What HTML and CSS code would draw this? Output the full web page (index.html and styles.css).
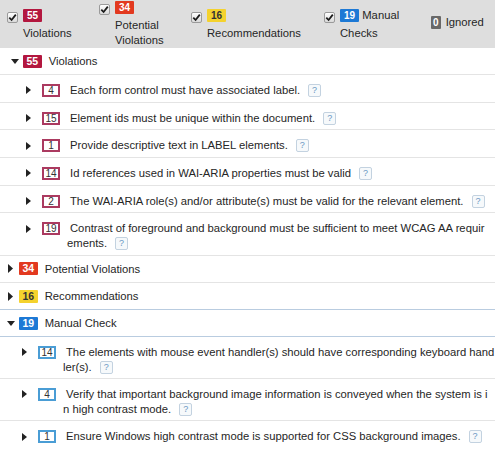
FILE: index.html
```html
<!DOCTYPE html>
<html>
<head>
<meta charset="utf-8">
<link rel="stylesheet" href="styles.css">
</head>
<body>
<div class="panel">
  <div class="filters">
    <div class="filter">
      <span class="check"><svg width="9" height="9" viewBox="0 0 9 9"><path d="M1.3 4.6L3.6 7L7.8 1.6" fill="none" stroke="#1c1c1c" stroke-width="1.8"/></svg></span>
      <span class="filter-text"><span class="badge badge--violation">55</span> Violations</span>
    </div>
    <div class="filter">
      <span class="check"><svg width="9" height="9" viewBox="0 0 9 9"><path d="M1.3 4.6L3.6 7L7.8 1.6" fill="none" stroke="#1c1c1c" stroke-width="1.8"/></svg></span>
      <span class="filter-text"><span class="badge badge--potential">34</span> Potential Violations</span>
    </div>
    <div class="filter">
      <span class="check"><svg width="9" height="9" viewBox="0 0 9 9"><path d="M1.3 4.6L3.6 7L7.8 1.6" fill="none" stroke="#1c1c1c" stroke-width="1.8"/></svg></span>
      <span class="filter-text"><span class="badge badge--recommendation">16</span> Recommendations</span>
    </div>
    <div class="filter">
      <span class="check"><svg width="9" height="9" viewBox="0 0 9 9"><path d="M1.3 4.6L3.6 7L7.8 1.6" fill="none" stroke="#1c1c1c" stroke-width="1.8"/></svg></span>
      <span class="filter-text"><span class="badge badge--manual">19</span> Manual Checks</span>
    </div>
    <div class="filter filter--plain">
      <span class="filter-text"><span class="badge badge--ignored">0</span> Ignored</span>
    </div>
  </div>

  <ul class="groups">
    <li class="group group--shift">
      <div class="group-head">
        <span class="toggle"><svg width="8" height="5" viewBox="0 0 8 5"><path d="M0 0H8L4 5Z" fill="#222"/></svg></span>
        <span class="count count--violation">55</span>
        <span class="group-title">Violations</span>
      </div>
      <ul class="rules">
        <li class="rule">
          <span class="rule-toggle"><svg width="5" height="8" viewBox="0 0 5 8"><path d="M0 0L5 4L0 8Z" fill="#222"/></svg></span>
          <span class="rule-count rule-count--violation">4</span>
          <span class="rule-text">Each form control must have associated label.<span class="help">?</span></span>
        </li>
        <li class="rule">
          <span class="rule-toggle"><svg width="5" height="8" viewBox="0 0 5 8"><path d="M0 0L5 4L0 8Z" fill="#222"/></svg></span>
          <span class="rule-count rule-count--violation">15</span>
          <span class="rule-text">Element ids must be unique within the document.<span class="help">?</span></span>
        </li>
        <li class="rule">
          <span class="rule-toggle"><svg width="5" height="8" viewBox="0 0 5 8"><path d="M0 0L5 4L0 8Z" fill="#222"/></svg></span>
          <span class="rule-count rule-count--violation">1</span>
          <span class="rule-text">Provide descriptive text in LABEL elements.<span class="help">?</span></span>
        </li>
        <li class="rule">
          <span class="rule-toggle"><svg width="5" height="8" viewBox="0 0 5 8"><path d="M0 0L5 4L0 8Z" fill="#222"/></svg></span>
          <span class="rule-count rule-count--violation">14</span>
          <span class="rule-text">Id references used in WAI-ARIA properties must be valid<span class="help">?</span></span>
        </li>
        <li class="rule">
          <span class="rule-toggle"><svg width="5" height="8" viewBox="0 0 5 8"><path d="M0 0L5 4L0 8Z" fill="#222"/></svg></span>
          <span class="rule-count rule-count--violation">2</span>
          <span class="rule-text">The WAI-ARIA role(s) and/or attribute(s) must be valid for the relevant element.<span class="help">?</span></span>
        </li>
        <li class="rule">
          <span class="rule-toggle"><svg width="5" height="8" viewBox="0 0 5 8"><path d="M0 0L5 4L0 8Z" fill="#222"/></svg></span>
          <span class="rule-count rule-count--violation">19</span>
          <span class="rule-text">Contrast of foreground and background must be sufficient to meet WCAG AA requir<br>ements.<span class="help">?</span></span>
        </li>
      </ul>
    </li>

    <li class="group">
      <div class="group-head">
        <span class="toggle"><svg width="5" height="9" viewBox="0 0 5 9"><path d="M0 0L5 4.5L0 9Z" fill="#222"/></svg></span>
        <span class="count count--potential">34</span>
        <span class="group-title">Potential Violations</span>
      </div>
    </li>

    <li class="group">
      <div class="group-head">
        <span class="toggle"><svg width="5" height="9" viewBox="0 0 5 9"><path d="M0 0L5 4.5L0 9Z" fill="#222"/></svg></span>
        <span class="count count--recommendation">16</span>
        <span class="group-title">Recommendations</span>
      </div>
    </li>

    <li class="group group--focus">
      <div class="group-head">
        <span class="toggle"><svg width="8" height="5" viewBox="0 0 8 5"><path d="M0 0H8L4 5Z" fill="#222"/></svg></span>
        <span class="count count--manual">19</span>
        <span class="group-title">Manual Check</span>
      </div>
      <ul class="rules">
        <li class="rule">
          <span class="rule-toggle"><svg width="5" height="8" viewBox="0 0 5 8"><path d="M0 0L5 4L0 8Z" fill="#222"/></svg></span>
          <span class="rule-count rule-count--manual">14</span>
          <span class="rule-text">The elements with mouse event handler(s) should have corresponding keyboard hand<br>ler(s).<span class="help">?</span></span>
        </li>
        <li class="rule">
          <span class="rule-toggle"><svg width="5" height="8" viewBox="0 0 5 8"><path d="M0 0L5 4L0 8Z" fill="#222"/></svg></span>
          <span class="rule-count rule-count--manual">4</span>
          <span class="rule-text">Verify that important background image information is conveyed when the system is i<br>n high contrast mode.<span class="help">?</span></span>
        </li>
        <li class="rule">
          <span class="rule-toggle"><svg width="5" height="8" viewBox="0 0 5 8"><path d="M0 0L5 4L0 8Z" fill="#222"/></svg></span>
          <span class="rule-count rule-count--manual">1</span>
          <span class="rule-text">Ensure Windows high contrast mode is supported for CSS background images.<span class="help">?</span></span>
        </li>
      </ul>
    </li>
  </ul>
</div>
</body>
</html>
```

FILE: styles.css
```css
* {
  box-sizing: border-box;
}

body {
  margin: 0;
  background: #ffffff;
  font-family: "Liberation Sans", Arial, sans-serif;
  font-size: 11.25px;
  color: #262626;
}

ul {
  list-style: none;
  margin: 0;
  padding: 0;
}

/* ---------- filter bar ---------- */
.filters {
  display: grid;
  grid-template-columns: 92px 92px 133px 107px 1fr;
  align-items: center;
  height: 48px;
  padding-left: 7px;
  background: #dedede;
}

.filter {
  display: flex;
  align-items: flex-start;
  padding-right: 12px;
}

.filter--plain {
  padding-right: 0;
}

.check {
  flex: none;
  display: flex;
  align-items: center;
  justify-content: center;
  width: 11px;
  height: 11px;
  margin: 4px 5px 0 0;
  border: 1px solid #9a9a9a;
  border-radius: 2px;
  background: linear-gradient(#ffffff, #d9d9d9);
}

.filter-text {
  line-height: 15px;
}

.badge {
  display: inline-block;
  height: 13px;
  margin: 1px 0 4px;
  padding: 0 4px;
  border-radius: 1px;
  font-size: 10px;
  font-weight: bold;
  line-height: 13px;
  color: #ffffff;
}

.badge--violation { background: #b3173f; }
.badge--potential { background: #e2391f; }
.badge--recommendation { background: #f4d22e; color: #333333; }
.badge--manual { background: #1d79d5; }
.badge--ignored {
  background: #686868;
  padding: 0 2px;
  margin-right: 2px;
}

/* ---------- groups ---------- */
.group-head {
  display: flex;
  align-items: center;
  padding: 6px 0 5.66px 6px;
  line-height: 14.5px;
  border-bottom: 1px solid #e4e4e4;
}

.group--shift .group-head {
  padding-left: 10px;
}

.group--focus .group-head {
  border-bottom-color: #b9cce0;
  box-shadow: 0 -1px 0 #b9cce0;
}

.toggle {
  flex: none;
  display: flex;
  align-items: center;
  justify-content: center;
  width: 9px;
  height: 14.5px;
  margin-right: 4px;
}

.count {
  flex: none;
  height: 13px;
  padding: 0 3.5px;
  margin-right: 7px;
  border-radius: 1px;
  font-size: 10.5px;
  font-weight: bold;
  line-height: 13px;
  color: #ffffff;
}

.count--violation { background: #b3173f; }
.count--potential { background: #e2391f; }
.count--recommendation { background: #f4d22e; color: #333333; }
.count--manual { background: #1d79d5; }

/* ---------- rules ---------- */
.rule {
  display: flex;
  align-items: flex-start;
  padding: 8px 0 4.16px 22px;
  line-height: 14.5px;
  border-bottom: 1px solid #e4e4e4;
}

.group--shift .rule {
  padding-left: 26px;
}

.group:last-child .rule:last-child {
  border-bottom: none;
}

.rule-toggle {
  flex: none;
  display: flex;
  align-items: center;
  width: 5px;
  height: 14.5px;
  margin-right: 11px;
}

.rule-count {
  flex: none;
  width: 18px;
  height: 13px;
  margin: 0.75px 7px 0 0;
  border: 2px solid #ab3a60;
  background: #ffffff;
  font-size: 10px;
  line-height: 9px;
  text-align: center;
  color: #333333;
}

.rule-count--manual {
  border-color: #4a9dd5;
}

.rule-text {
  flex: 1;
  min-width: 0;
  white-space: nowrap;
  text-indent: 3px;
}

.help {
  display: inline-block;
  width: 13px;
  height: 13px;
  margin-left: 8px;
  border: 1px solid #c3d2e0;
  border-radius: 2px;
  background: #f6f9fb;
  font-size: 9px;
  line-height: 11px;
  text-align: center;
  text-indent: 0;
  color: #6b98c3;
  vertical-align: 1px;
}
```
